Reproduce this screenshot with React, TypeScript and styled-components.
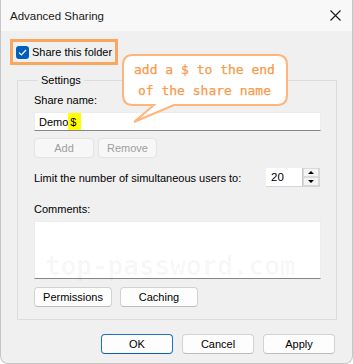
import React from 'react'
import styled, { createGlobalStyle } from 'styled-components'

const GlobalStyle = createGlobalStyle`
    html, body {
        margin: 0;
        padding: 0;
        background: #ffffff;
    }
    * {
        box-sizing: border-box;
    }
`

const Window = styled.div`
    position: relative;
    width: 353px;
    height: 364px;
    display: flex;
    flex-direction: column;
    background: #f0f0f0;
    border: 1px solid #c6c6c6;
    border-top: none;
    border-radius: 0 0 8px 8px;
    overflow: hidden;
    font-family: "Liberation Sans", Arial, sans-serif;
    font-size: 11px;
    color: #000;
`

const TitleBar = styled.div`
    height: 31px;
    flex: none;
    display: flex;
    align-items: center;
    justify-content: space-between;
    padding: 0 11px 0 9px;
    background: #f8f8f8;
    font-size: 11.5px;
    color: #1b1b1b;
`

const CloseIcon = () => (
    <svg width="11" height="11" viewBox="0 0 11 11">
        <path d="M0.5 0.5 L10.5 10.5 M10.5 0.5 L0.5 10.5" stroke="#1a1a1a" strokeWidth="1.1" fill="none" />
    </svg>
)

const Body = styled.div`
    display: flex;
    flex-direction: column;
    padding: 0 15px 0 16px;
`

const ShareRow = styled.label`
    align-self: flex-start;
    display: flex;
    align-items: center;
    gap: 3px;
    height: 26px;
    margin: 8px 0 0 -7px;
    padding: 0 3px 0 3px;
    border: 3px solid #f9a75e;
    line-height: 14px;
`

const CheckBox = styled.span`
    width: 13px;
    height: 13px;
    border-radius: 3px;
    background: #005fb8;
    display: flex;
    align-items: center;
    justify-content: center;
`

const Group = styled.fieldset`
    margin: 7px 0 0;
    min-width: 0;
    padding: 0 15px 12px 16px;
    border: 1px solid #dcdcdc;
    display: flex;
    flex-direction: column;
`

const Legend = styled.legend`
    margin-left: 4px;
    padding: 0 3px;
    line-height: 16px;
`

const Label = styled.div<{ $top: number }>`
    margin-top: ${p => p.$top}px;
    line-height: 14px;
`

const Field = styled.div<{ $height: number }>`
    height: ${p => p.$height}px;
    margin-top: 5px;
    background: #ffffff;
    border: 1px solid #ececec;
    border-bottom-color: #858585;
    display: flex;
    align-items: center;
    padding-left: 4px;
`

const Mark = styled.span`
    background: #ffff00;
    align-self: stretch;
    display: flex;
    align-items: center;
    padding: 0 5px 0 2px;
`

const ButtonRow = styled.div<{ $top: number; $gap: number }>`
    display: flex;
    gap: ${p => p.$gap}px;
    margin-top: ${p => p.$top}px;
`

const Button = styled.button<{ $width: number; $primary?: boolean }>`
    width: ${p => p.$width}px;
    height: 20px;
    padding: 0;
    font-family: inherit;
    font-size: 11px;
    color: ${p => (p.disabled ? '#9e9e9e' : '#000')};
    background: ${p => (p.disabled ? '#f7f7f7' : '#fdfdfd')};
    border: 1px solid ${p => (p.$primary ? '#1d6fc1' : p.disabled ? '#e4e4e4' : '#d2d2d2')};
    border-bottom-color: ${p => (p.$primary ? '#0a5fb0' : p.disabled ? '#e4e4e4' : '#bcbcbc')};
    border-radius: 4px;
`

const LimitRow = styled.div`
    display: flex;
    align-items: center;
    justify-content: space-between;
    margin-top: 10px;
    padding-right: 1px;
`

const Spinner = styled.div`
    width: 54px;
    height: 19px;
    display: flex;
    background: #ffffff;
    border: 1px solid #d5d5d5;
    border-left: none;
    border-top: none;
`

const SpinValue = styled.div`
    flex: 1;
    display: flex;
    align-items: center;
    padding-left: 5px;
    font-size: 11.5px;
`

const SpinButtons = styled.div`
    width: 17px;
    display: flex;
    flex-direction: column;
    border-left: 1px solid #c8c8c8;
`

const SpinArrow = styled.div<{ $down?: boolean }>`
    flex: 1;
    display: flex;
    align-items: center;
    justify-content: center;
    background: #f4f4f4;
    border: 1px solid #d9d9d9;
    &::after {
        content: '';
        border-left: 3px solid transparent;
        border-right: 3px solid transparent;
        ${p => (p.$down ? 'border-top: 3px solid #000;' : 'border-bottom: 3px solid #000;')}
    }
`

const Footer = styled.div`
    display: flex;
    justify-content: flex-end;
    gap: 9px;
    margin: 14px 2px 0 0;
`

const Watermark = styled.div`
    position: absolute;
    left: 44px;
    top: 251px;
    font-family: "DejaVu Sans Mono", monospace;
    font-weight: bold;
    font-size: 26px;
    color: rgba(0, 0, 0, 0.035);
    pointer-events: none;
`

const Bubble = styled.svg`
    position: absolute;
    left: 121px;
    top: 54px;
`

const BubbleText = styled.div`
    position: absolute;
    left: 122px;
    top: 59px;
    width: 163px;
    text-align: center;
    font-family: "DejaVu Sans Mono", monospace;
    font-size: 13px;
    line-height: 21px;
    color: #f79a4a;
    -webkit-text-stroke: 0.25px #f79a4a;
    white-space: pre;
`

export default function App() {
    return (
        <>
            <GlobalStyle />
            <Window>
                <TitleBar>
                    <span>Advanced Sharing</span>
                    <CloseIcon />
                </TitleBar>
                <Body>
                    <ShareRow>
                        <CheckBox>
                            <svg width="9" height="7" viewBox="0 0 9 7">
                                <path d="M1 3.6 L3.4 6 L8 1" stroke="#fff" strokeWidth="1.2" fill="none" />
                            </svg>
                        </CheckBox>
                        Share this folder
                    </ShareRow>
                    <Group>
                        <Legend>Settings</Legend>
                        <Label $top={5}>Share name:</Label>
                        <Field $height={19}>
                            Demo<Mark>$</Mark>
                        </Field>
                        <ButtonRow $top={7} $gap={4}>
                            <Button $width={60} disabled>Add</Button>
                            <Button $width={59} disabled>Remove</Button>
                        </ButtonRow>
                        <LimitRow>
                            <span>Limit the number of simultaneous users to:</span>
                            <Spinner>
                                <SpinValue>20</SpinValue>
                                <SpinButtons>
                                    <SpinArrow />
                                    <SpinArrow $down />
                                </SpinButtons>
                            </Spinner>
                        </LimitRow>
                        <Label $top={15}>Comments:</Label>
                        <Field $height={58} />
                        <ButtonRow $top={8} $gap={8}>
                            <Button $width={78}>Permissions</Button>
                            <Button $width={78}>Caching</Button>
                        </ButtonRow>
                    </Group>
                    <Footer>
                        <Button $width={72} $primary>OK</Button>
                        <Button $width={72}>Cancel</Button>
                        <Button $width={72}>Apply</Button>
                    </Footer>
                </Body>
                <Watermark>top-password.com</Watermark>
                <Bubble width="167" height="72" viewBox="0 0 167 72">
                    <path
                        d="M11 1 H155 Q165 1 165 11 V41 Q165 51 155 51 H52 L12 68 L32 51 H11 Q1 51 1 41 V11 Q1 1 11 1 Z"
                        fill="#ffffff"
                        stroke="#fdb57b"
                        strokeWidth="2"
                    />
                </Bubble>
                <BubbleText>{'add a $ to the end\nof the share name'}</BubbleText>
            </Window>
        </>
    )
}
